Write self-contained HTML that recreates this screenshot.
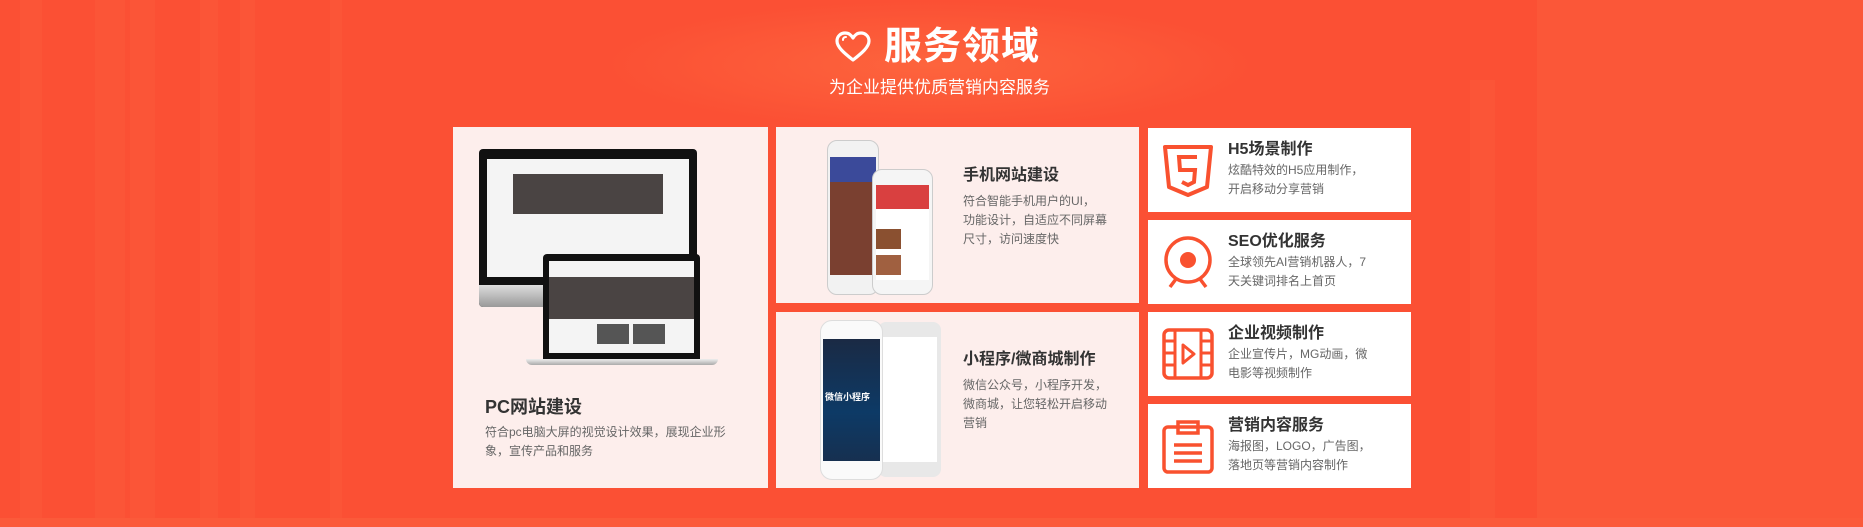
<!DOCTYPE html>
<html><head><meta charset="utf-8"><style>
*{margin:0;padding:0;box-sizing:border-box}
html,body{width:1863px;height:527px;overflow:hidden}
body{position:relative;background:#fb5738;font-family:"Liberation Sans","Noto Sans CJK SC",sans-serif}
.bgl{position:absolute;left:0;top:0;width:1537px;height:527px;background:#fb5034}
.st{position:absolute;top:0;height:527px;background:#fc6440;opacity:.25}
.glow{position:absolute;left:600px;top:0;width:660px;height:130px;background:radial-gradient(ellipse at center,rgba(255,120,70,.5),rgba(255,120,70,0) 70%)}
.abs{position:absolute}
.card{position:absolute;background:#fdeeec}
.wb{position:absolute;background:#fff;left:1148px;width:263px}
.t{position:absolute;color:#333;font-weight:bold;white-space:nowrap}
.d{position:absolute;color:#666;font-size:12px;line-height:19px;white-space:nowrap}
.wt{font-size:16px;line-height:20px;left:80px;top:12px}
.wd{font-size:12px;line-height:19px;left:80px;top:33px;color:#666;position:absolute;white-space:nowrap}
</style></head><body>
<div class="bgl"></div>
<div class="st" style="left:20px;width:22px"></div>
<div class="st" style="left:95px;width:30px"></div>
<div class="st" style="left:130px;width:25px"></div>
<div class="st" style="left:200px;width:18px"></div>
<div class="st" style="left:240px;width:15px"></div>
<div class="st" style="left:330px;width:12px"></div>
<div class="st" style="left:1470px;width:25px;top:80px;height:447px"></div>
<div class="abs" style="left:0;top:518px;width:1863px;height:9px;background:#fb5a3a"></div>
<div class="glow"></div>

<svg class="abs" style="left:834px;top:31px" width="38" height="32" viewBox="0 0 38 32"><path d="M19 29 C10 22 3 16 3 10 C3 5 7 2 11 2 C15 2 17 4 19 7 C21 4 23 2 27 2 C31 2 35 5 35 10 C35 16 28 22 19 29Z" fill="none" stroke="#fff" stroke-width="3.2" stroke-linejoin="round"/><path d="M9 9 C9 7 10 6 12 6" fill="none" stroke="#fff" stroke-width="2" stroke-linecap="round"/></svg>
<div class="abs" style="left:884px;top:24px;color:#fff;font-size:38px;font-weight:bold;line-height:46px;letter-spacing:1px">服务领域</div>
<div class="abs" style="left:829px;top:77px;color:#fff;font-size:17px;line-height:22px">为企业提供优质营销内容服务</div>

<div class="card" style="left:453px;top:127px;width:315px;height:361px">
 <div class="abs" style="left:26px;top:22px;width:218px;height:158px;background:#111;border-radius:4px"></div>
 <div class="abs" style="left:34px;top:32px;width:202px;height:118px;background:#f4f4f4"></div>
 <div class="abs" style="left:60px;top:47px;width:150px;height:40px;background:#4a4443"></div>
 <div class="abs" style="left:26px;top:158px;width:218px;height:22px;background:linear-gradient(#ddd,#999);border-radius:0 0 4px 4px"></div>
 <div class="abs" style="left:100px;top:180px;width:10px;height:25px;background:#888"></div>
 <div class="abs" style="left:90px;top:127px;width:157px;height:105px;background:#111;border-radius:4px 4px 0 0"></div>
 <div class="abs" style="left:96px;top:134px;width:145px;height:92px;background:#f4f4f4"></div>
 <div class="abs" style="left:96px;top:150px;width:145px;height:42px;background:#4a4443"></div>
 <div class="abs" style="left:144px;top:197px;width:32px;height:20px;background:#555"></div>
 <div class="abs" style="left:180px;top:197px;width:32px;height:20px;background:#555"></div>
 <div class="abs" style="left:73px;top:232px;width:192px;height:6px;background:linear-gradient(#eee,#aaa);border-radius:0 0 6px 6px"></div>
 <div class="t" style="left:32px;top:269px;font-size:18px;line-height:22px">PC网站建设</div>
 <div class="d" style="left:32px;top:296px">符合pc电脑大屏的视觉设计效果，展现企业形<br>象，宣传产品和服务</div>
</div>

<div class="card" style="left:776px;top:127px;width:363px;height:176px">
 <div class="abs" style="left:51px;top:13px;width:52px;height:155px;background:#f2f2f2;border:1px solid #ccc;border-radius:10px"></div>
 <div class="abs" style="left:54px;top:30px;width:46px;height:118px;background:#7a4030"></div>
 <div class="abs" style="left:54px;top:30px;width:46px;height:25px;background:#3b4a9a"></div>
 <div class="abs" style="left:96px;top:42px;width:61px;height:126px;background:#f5f5f5;border:1px solid #ccc;border-radius:10px"></div>
 <div class="abs" style="left:100px;top:58px;width:53px;height:95px;background:#fff"></div>
 <div class="abs" style="left:100px;top:58px;width:53px;height:24px;background:#d94040"></div>
 <div class="abs" style="left:100px;top:102px;width:25px;height:20px;background:#8a5030"></div>
 <div class="abs" style="left:100px;top:128px;width:25px;height:20px;background:#a06040"></div>
 <div class="t" style="left:187px;top:39px;font-size:16px;line-height:20px">手机网站建设</div>
 <div class="d" style="left:187px;top:65px">符合智能手机用户的UI，<br>功能设计，自适应不同屏幕<br>尺寸，访问速度快</div>
</div>

<div class="card" style="left:776px;top:312px;width:363px;height:176px">
 <div class="abs" style="left:102px;top:10px;width:63px;height:155px;background:#e8e8e8;border-radius:8px"></div>
 <div class="abs" style="left:106px;top:25px;width:55px;height:125px;background:#fff"></div>
 <div class="abs" style="left:44px;top:8px;width:63px;height:160px;background:#fafafa;border:1px solid #ddd;border-radius:12px"></div>
 <div class="abs" style="left:47px;top:27px;width:57px;height:122px;background:linear-gradient(#1a2a44,#0d3a66 60%,#163050)"></div>
 <div class="abs" style="left:49px;top:78px;color:#fff;font-size:9px;font-weight:bold">微信小程序</div>
 <div class="t" style="left:187px;top:38px;font-size:16px;line-height:20px">小程序/微商城制作</div>
 <div class="d" style="left:187px;top:64px">微信公众号，小程序开发，<br>微商城，让您轻松开启移动<br>营销</div>
</div>

<div class="wb" style="top:128px;height:84px">
 <svg class="abs" style="left:14px;top:16px" width="52" height="54" viewBox="0 0 52 54"><path d="M3 3 H49 L45 43 L26 51 L7 43 Z" fill="none" stroke="#f9512f" stroke-width="4" stroke-linejoin="round"/><path d="M35 13 H17 L18 26 H33 L32 38 L26 41 L20 38" fill="none" stroke="#f9512f" stroke-width="4"/></svg>
 <div class="t wt">H5场景制作</div>
 <div class="wd">炫酷特效的H5应用制作，<br>开启移动分享营销</div>
</div>
<div class="wb" style="top:220px;height:84px">
 <svg class="abs" style="left:14px;top:14px" width="52" height="58" viewBox="0 0 52 58"><circle cx="26" cy="26" r="22" fill="none" stroke="#f9512f" stroke-width="3.5"/><circle cx="26" cy="26" r="8" fill="#f9512f"/><path d="M14 45 L8 53 M38 45 L44 53" stroke="#f9512f" stroke-width="3.5"/></svg>
 <div class="t wt">SEO优化服务</div>
 <div class="wd">全球领先AI营销机器人，7<br>天关键词排名上首页</div>
</div>
<div class="wb" style="top:312px;height:84px">
 <svg class="abs" style="left:14px;top:16px" width="52" height="54" viewBox="0 0 52 54"><rect x="2" y="2" width="48" height="48" rx="5" fill="none" stroke="#f9512f" stroke-width="3.5"/><path d="M13 2 V50 M39 2 V50 M2 13 H13 M2 25 H13 M2 37 H13 M39 13 H50 M39 25 H50 M39 37 H50" stroke="#f9512f" stroke-width="3"/><path d="M21 17 L32 26 L21 35 Z" fill="none" stroke="#f9512f" stroke-width="3" stroke-linejoin="round"/></svg>
 <div class="t wt">企业视频制作</div>
 <div class="wd">企业宣传片，MG动画，微<br>电影等视频制作</div>
</div>
<div class="wb" style="top:404px;height:84px">
 <svg class="abs" style="left:14px;top:14px" width="52" height="58" viewBox="0 0 52 58"><rect x="2" y="9" width="48" height="45" rx="4" fill="none" stroke="#f9512f" stroke-width="3.5"/><path d="M16 9 V4 H36 V9 M16 9 V15 H36 V9" fill="none" stroke="#f9512f" stroke-width="3.5"/><path d="M12 27 H40 M12 35 H40 M12 43 H40" stroke="#f9512f" stroke-width="3.5"/></svg>
 <div class="t wt">营销内容服务</div>
 <div class="wd">海报图，LOGO，广告图，<br>落地页等营销内容制作</div>
</div>
</body></html>
